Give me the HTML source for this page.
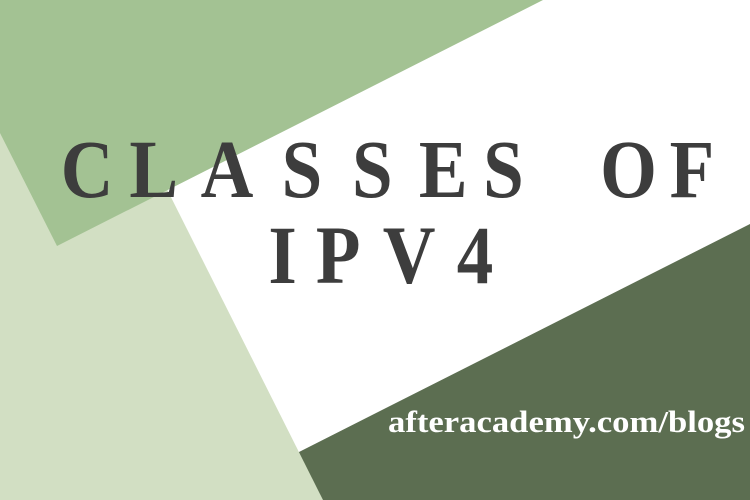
<!DOCTYPE html>
<html><head><style>html,body{margin:0;padding:0;width:750px;height:500px;overflow:hidden;background:#fff}</style></head>
<body>
<svg width="750" height="500" viewBox="0 0 750 500" xmlns="http://www.w3.org/2000/svg">
<rect width="750" height="500" fill="#fff"/>
<polygon points="299,452 750,224 750,500 290,500" fill="#5c6e51"/>
<polygon points="0,0 72,0 323,500 0,500" fill="#d2dfc3"/>
<polygon points="0,0 543,0 57,246 0,133" fill="#a3c293"/>
<g transform="scale(0.88,1)" font-family="Liberation Serif, serif" font-weight="bold" font-size="83" fill="#3d3d3d">
<text y="197" x="69 147 228 320 400 476 549 682 761">CLASSESOF</text>
<text y="283" x="305 359 435 519">IPV4</text>
</g>
<text x="388" y="432" font-family="Liberation Serif, serif" font-weight="bold" font-size="31" fill="#fff" textLength="357" lengthAdjust="spacingAndGlyphs">afteracademy.com/blogs</text>
</svg>
</body></html>
